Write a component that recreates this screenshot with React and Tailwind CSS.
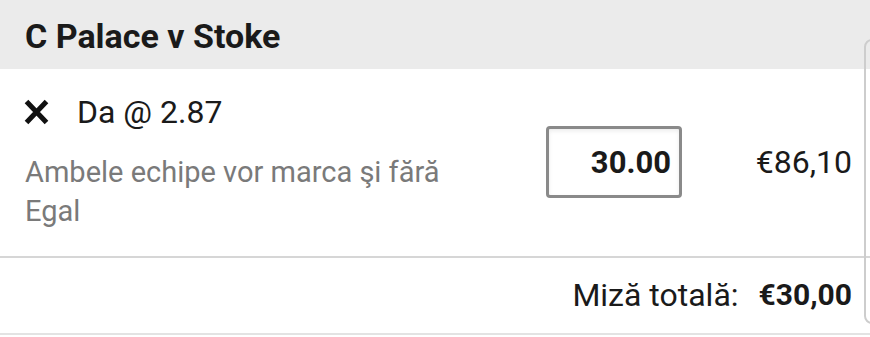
export default function App() {
  return (
    <div className="relative w-[870px] h-[337px] bg-white overflow-hidden" style={{ fontFamily: "Roboto, 'Liberation Sans', sans-serif" }}>
      <div className="h-[69px] bg-[#ebebeb] flex items-center pl-[25px] pt-[2px]">
        <span className="text-[34px] font-bold text-[#1a1a1a] leading-none">C Palace v Stoke</span>
      </div>
      <div className="flex h-[189px] border-b-[2px] border-[#d6d6d6]">
        <div className="flex-1 pl-[24px] pt-[27px]">
          <div className="flex items-center h-[32px]">
            <svg width="25" height="26" viewBox="0 0 25 26" className="mr-[28px] shrink-0">
              <path d="M2.5 2.5 L22.5 23.5 M22.5 2.5 L2.5 23.5" stroke="#111" strokeWidth="5" strokeLinecap="butt" />
            </svg>
            <span className="text-[32px] text-[#1a1a1a] leading-none">Da @ 2.87</span>
          </div>
          <div className="mt-[25px] w-[460px] pl-[1px] text-[29px] leading-[39px] text-[#7a7a7a]">
            Ambele echipe vor marca şi fără Egal
          </div>
        </div>
        <div className="pt-[57px] pr-[18px] flex items-start">
          <div className="w-[136px] h-[72px] border-[3px] border-[#8a8a8a] rounded-[4px] shadow-[inset_0_2px_4px_rgba(0,0,0,0.08)] flex items-center justify-end pr-[8px]">
            <span className="text-[31px] font-bold text-[#1a1a1a] leading-none">30.00</span>
          </div>
          <div className="w-[170px] flex justify-end pt-[20px]">
            <span className="text-[32px] text-[#1a1a1a] leading-none">€86,10</span>
          </div>
        </div>
      </div>
      <div className="flex justify-end items-center h-[77px] pr-[18px] pb-[2px] border-b-[2px] border-[#e3e3e3]">
        <span className="text-[32px] text-[#1a1a1a] leading-none">Miză totală:</span>
        <span className="ml-[20px] text-[30px] font-bold text-[#1a1a1a] leading-none">€30,00</span>
      </div>
      <div className="absolute left-[864px] top-[39px] h-[285px] w-[30px] border-[2px] border-[#cdcdcd] rounded-[8px]" />
    </div>
  );
}
